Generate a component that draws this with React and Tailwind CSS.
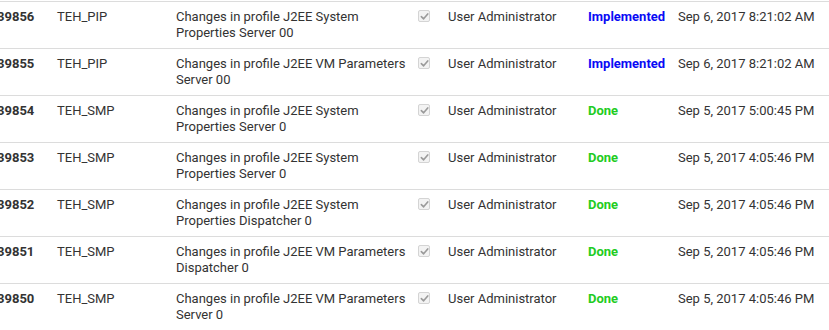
import React from "react";

const rows = [
  { id: "39856", sys: "TEH_PIP", desc: "Changes in profile J2EE System Properties Server 00", status: "Implemented", date: "Sep 6, 2017 8:21:02 AM" },
  { id: "39855", sys: "TEH_PIP", desc: "Changes in profile J2EE VM Parameters Server 00", status: "Implemented", date: "Sep 6, 2017 8:21:02 AM" },
  { id: "39854", sys: "TEH_SMP", desc: "Changes in profile J2EE System Properties Server 0", status: "Done", date: "Sep 5, 2017 5:00:45 PM" },
  { id: "39853", sys: "TEH_SMP", desc: "Changes in profile J2EE System Properties Server 0", status: "Done", date: "Sep 5, 2017 4:05:46 PM" },
  { id: "39852", sys: "TEH_SMP", desc: "Changes in profile J2EE System Properties Dispatcher 0", status: "Done", date: "Sep 5, 2017 4:05:46 PM" },
  { id: "39851", sys: "TEH_SMP", desc: "Changes in profile J2EE VM Parameters Dispatcher 0", status: "Done", date: "Sep 5, 2017 4:05:46 PM" },
  { id: "39850", sys: "TEH_SMP", desc: "Changes in profile J2EE VM Parameters Server 0", status: "Done", date: "Sep 5, 2017 4:05:46 PM" },
];

function Check() {
  return (
    <div className="mt-[1px] w-[12px] h-[12px] rounded-[2px] border border-[#d4d4d4] bg-[#f3f3f3] flex items-center justify-center">
      <svg width="9" height="9" viewBox="0 0 10 10">
        <path d="M1.5 5.2 L4 7.6 L8.6 2.2" fill="none" stroke="#9a9a9a" strokeWidth="1.8" strokeLinecap="round" strokeLinejoin="round" />
      </svg>
    </div>
  );
}

export default function App() {
  return (
    <div className="w-[829px] h-[330px] overflow-hidden bg-white pt-[1px] text-[13px] leading-[16px] text-[#333]" style={{ fontFamily: "Roboto, 'Liberation Sans', sans-serif" }}>
      {rows.map((r) => (
        <div key={r.id} className="-ml-[3px] flex h-[47px] border-t border-[#dcdcdc] pt-[7px]">
          <div className="w-[60px] shrink-0 font-bold">{r.id}</div>
          <div className="w-[119px] shrink-0">{r.sys}</div>
          <div className="w-[242px] shrink-0 pr-[6px]">{r.desc}</div>
          <div className="w-[30px] shrink-0"><Check /></div>
          <div className="w-[140px] shrink-0">User Administrator</div>
          <div className={"w-[90px] shrink-0 font-bold " + (r.status === "Done" ? "text-[#22cc22]" : "text-[#0a0af5]")}>{r.status}</div>
          <div className="whitespace-nowrap">{r.date}</div>
        </div>
      ))}
    </div>
  );
}
